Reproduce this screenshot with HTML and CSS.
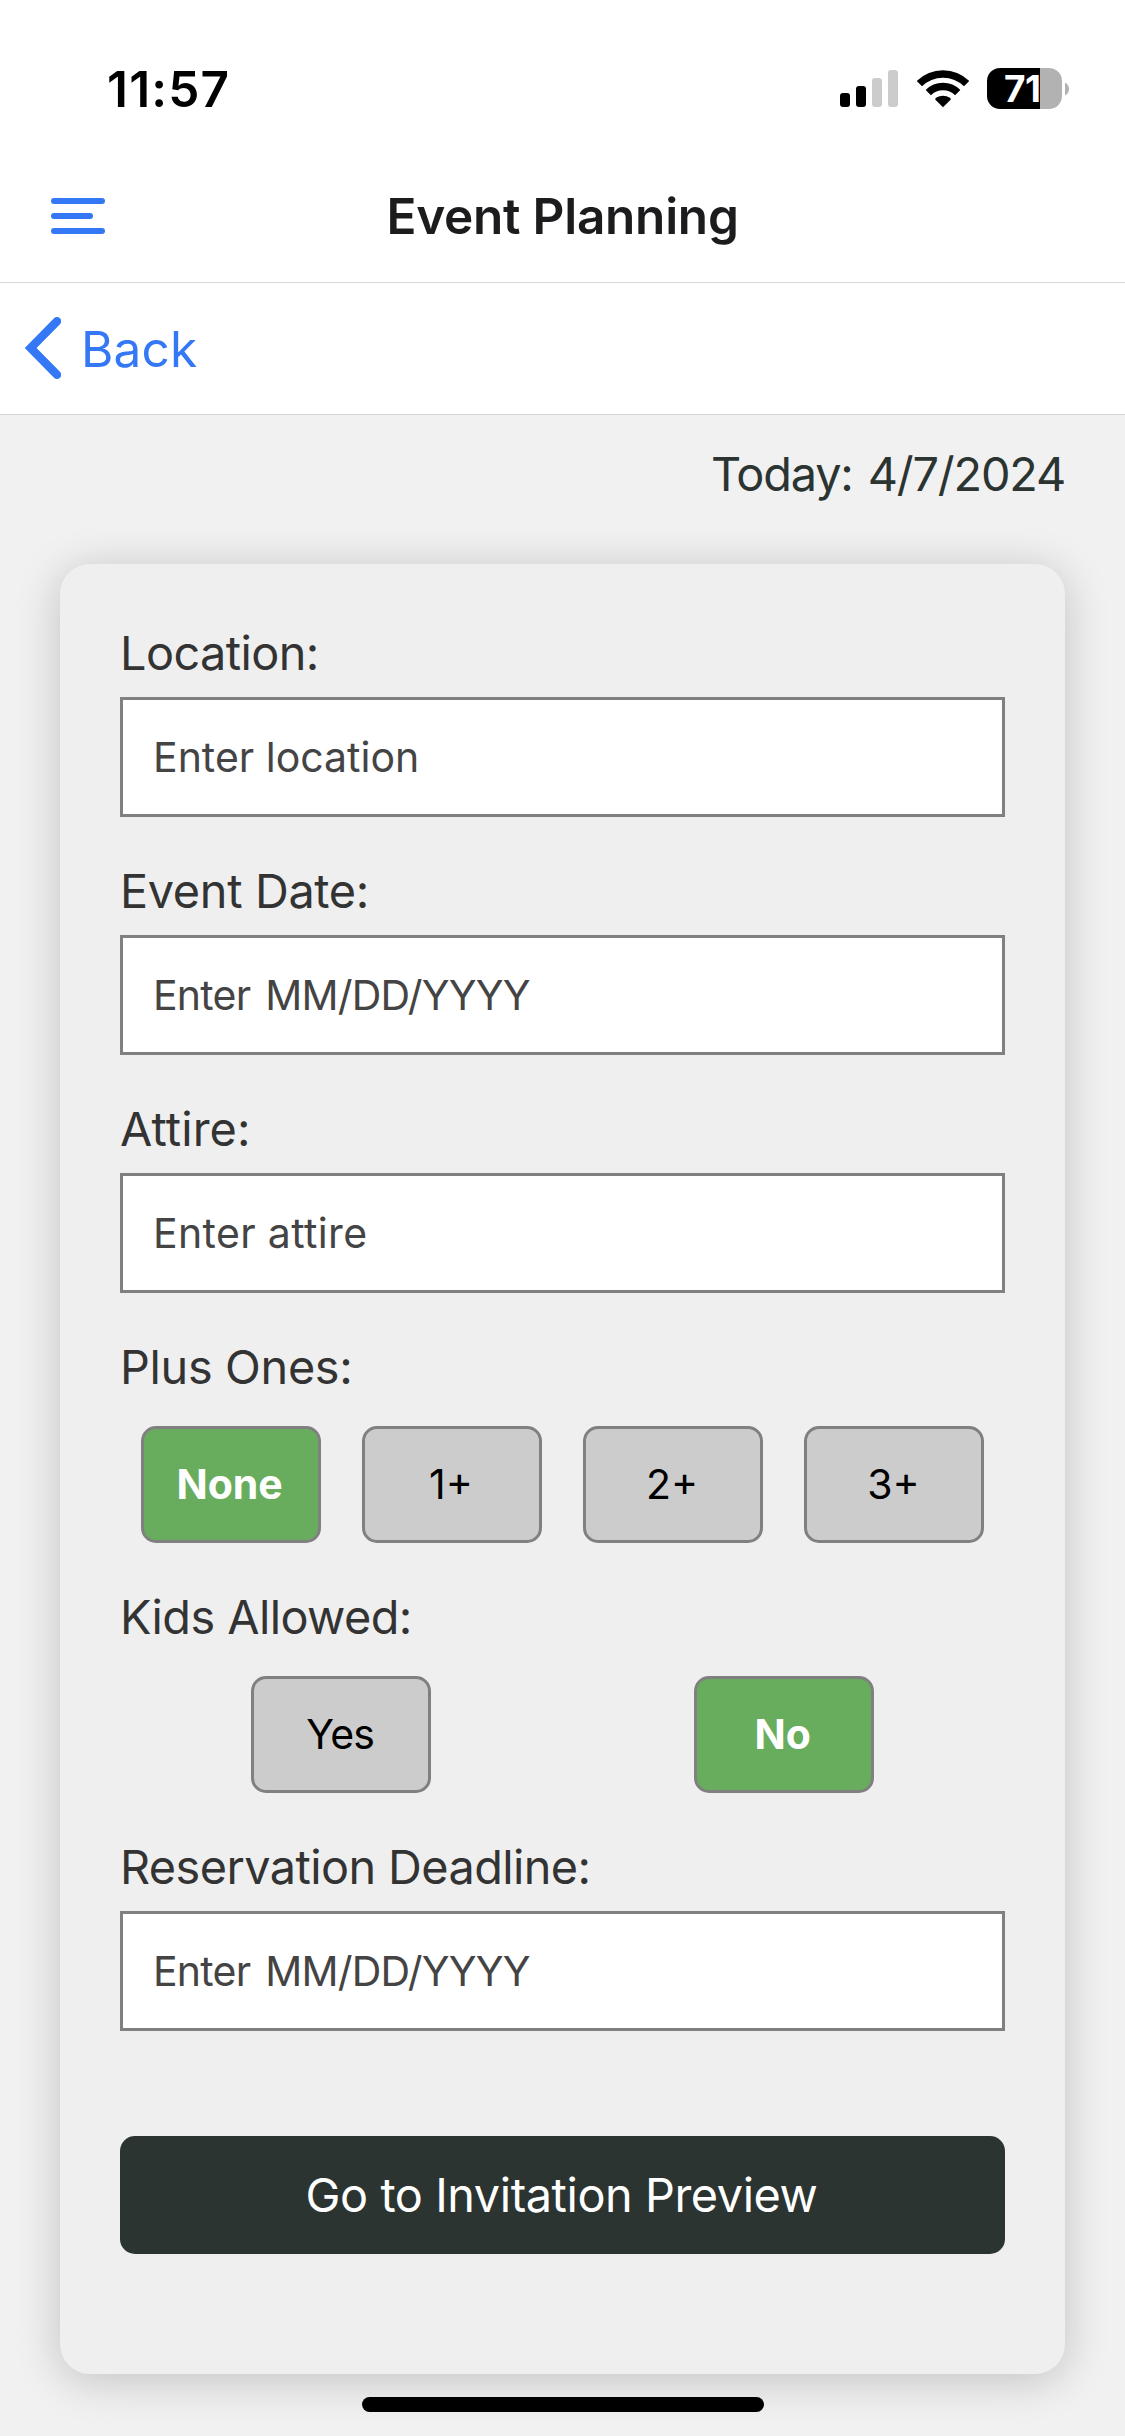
FILE: index.html
```html
<!DOCTYPE html>
<html lang="en">
<head>
<meta charset="utf-8">
<title>Event Planning</title>
<link rel="stylesheet" href="styles.css">
</head>
<body>
<div class="screen">
  <div class="status-bar">
    <span class="time">11:57</span>
    <div class="status-icons">
      <svg class="signal" width="58" height="37" viewBox="0 0 58 37">
        <rect x="0" y="23" width="10" height="14" rx="3"/>
        <rect x="16" y="16" width="10" height="21" rx="3"/>
        <rect x="32" y="8" width="10" height="29" rx="3" fill="#ccc"/>
        <rect x="48" y="0" width="10" height="37" rx="3" fill="#ccc"/>
      </svg>
      <svg class="wifi" width="52" height="38" viewBox="0 0 52 38">
        <g fill="none" stroke="#000" stroke-width="7.4">
          <path d="M2.4 13.7A33.4 33.4 0 0 1 49.6 13.7"/>
          <path d="M11.3 22.6A20.8 20.8 0 0 1 40.7 22.6"/>
        </g>
        <path d="M26 37.3L18.4 29.7Q17.8 28.6 19 27.8Q26 23.6 33 27.8Q34.2 28.6 33.6 29.7Z"/>
      </svg>
      <div class="battery">
        <div class="battery-body"><span class="battery-level">71</span></div>
        <svg width="4" height="14" viewBox="0 0 4 14"><path d="M0 .5Q4 2.5 4 7T0 13.5Z" fill="#b2b2b2"/></svg>
      </div>
    </div>
  </div>

  <header class="header">
    <svg class="menu" width="54" height="36" viewBox="0 0 54 36" fill="#3478f6">
      <rect width="54" height="6" rx="3"/>
      <rect y="15" width="42" height="6" rx="3"/>
      <rect y="30" width="54" height="6" rx="3"/>
    </svg>
    <h1 class="title">Event Planning</h1>
  </header>

  <nav class="back-bar">
    <svg width="36" height="62" viewBox="0 0 36 62">
      <path d="M32 4.2L5.6 31L32 57.8" fill="none" stroke="#3478f6" stroke-width="8.4" stroke-linecap="round" stroke-linejoin="miter"/>
    </svg>
    <span class="back-label">Back</span>
  </nav>

  <main class="content">
    <p class="today">Today: 4/7/2024</p>
    <form class="card">
      <div class="field">
        <label class="label">Location:</label>
        <input class="input" type="text" placeholder="Enter location">
      </div>
      <div class="field">
        <label class="label label-open">Event Date:</label>
        <input class="input input-date" type="text" placeholder="Enter MM/DD/YYYY">
      </div>
      <div class="field">
        <label class="label label-wide">Attire:</label>
        <input class="input input-wide" type="text" placeholder="Enter attire">
      </div>
      <div class="field choice">
        <span class="label label-open">Plus Ones:</span>
        <div class="options">
          <button type="button" class="option selected">None</button>
          <button type="button" class="option">1+</button>
          <button type="button" class="option">2+</button>
          <button type="button" class="option">3+</button>
        </div>
      </div>
      <div class="field choice">
        <span class="label">Kids Allowed:</span>
        <div class="options">
          <button type="button" class="option option-yes">Yes</button>
          <button type="button" class="option selected">No</button>
        </div>
      </div>
      <div class="field">
        <label class="label">Reservation Deadline:</label>
        <input class="input input-date" type="text" placeholder="Enter MM/DD/YYYY">
      </div>
      <button type="button" class="submit">Go to Invitation Preview</button>
    </form>
  </main>
  <div class="home-indicator"></div>
</div>
</body>
</html>
```
FILE: styles.css
```css
* {
  box-sizing: border-box;
}

body {
  margin: 0;
  font-family: Inter, "Liberation Sans", sans-serif;
}

.screen {
  position: relative;
  width: 1125px;
  height: 2436px;
  overflow: hidden;
  background: #f1f1f1;
}

.status-bar {
  display: flex;
  justify-content: space-between;
  height: 150px;
  padding: 28px 56px 0 107px;
  background: #fff;
}

.time {
  font-size: 49.5px;
  font-weight: 600;
  line-height: 122px;
  letter-spacing: 1.2px;
}

.status-icons {
  display: flex;
  align-items: center;
  height: 121px;
}

.wifi {
  margin-left: 18.5px;
}

.battery {
  display: flex;
  align-items: center;
  gap: 3px;
  margin-left: 18.5px;
}

.battery-body {
  width: 75px;
  height: 41px;
  border-radius: 13px;
  background: linear-gradient(to right, #000 53px, #b2b2b2 53px);
}

.battery-level {
  display: block;
  padding-left: 17px;
  color: #fff;
  font-size: 37px;
  font-weight: 700;
  line-height: 41px;
  letter-spacing: -0.5px;
}

.header {
  display: grid;
  grid-template-columns: 54px 1fr 54px;
  align-items: center;
  height: 133px;
  padding: 0 51px;
  border-bottom: 1px solid #d8d8d8;
  background: #fff;
}

.title {
  margin: 0;
  color: #1c1c1e;
  font-size: 49.5px;
  font-weight: 600;
  line-height: 60px;
  letter-spacing: -0.25px;
  text-align: center;
}

.back-bar {
  display: flex;
  align-items: center;
  gap: 20px;
  height: 132px;
  padding: 0 0 2px 25px;
  border-bottom: 1px solid #d8d8d8;
  background: #fff;
}

.back-label {
  padding-top: 2px;
  color: #3478f6;
  font-size: 49.5px;
  line-height: 60px;
  letter-spacing: 0.15px;
}

.content {
  padding: 29px 60px 0;
}

.today {
  margin: 0 0 60px;
  color: #2b3431;
  font-size: 46.8px;
  line-height: 60px;
  letter-spacing: -1.15px;
  word-spacing: 3px;
  text-align: right;
}

.card {
  display: flex;
  flex-direction: column;
  gap: 44px;
  height: 1810px;
  padding: 59px 60px 120px;
  border-radius: 30px;
  background: #efefef;
  box-shadow: 0 6px 45px rgba(0, 0, 0, 0.2);
}

.field {
  display: flex;
  flex-direction: column;
  gap: 14px;
}

.choice {
  gap: 29px;
}

.label {
  color: #333;
  font-size: 46.8px;
  line-height: 60px;
  letter-spacing: -0.57px;
}

.label-open {
  letter-spacing: -0.33px;
}

.label-wide {
  letter-spacing: 0.12px;
}

.input {
  width: 100%;
  height: 120px;
  padding: 0 30px;
  border: 3px solid #808080;
  border-radius: 0;
  background: #fff;
  font-family: inherit;
  font-size: 41px;
  letter-spacing: 0;
}

.input::placeholder {
  color: #444;
  opacity: 1;
}

.input-date {
  letter-spacing: -0.77px;
  word-spacing: 4px;
}

.input-wide {
  letter-spacing: 0.35px;
}

.options {
  display: flex;
  justify-content: space-around;
}

.option {
  width: 180px;
  height: 117px;
  padding: 0 2px 1px 0;
  border: 3px solid #808080;
  border-radius: 15px;
  background: #ccc;
  color: #000;
  font-family: inherit;
  font-size: 41px;
}

.option.selected {
  background: #68ad5d;
  color: #fff;
  font-weight: 700;
}

.option-yes {
  letter-spacing: -0.7px;
}

.submit {
  height: 118px;
  margin-top: 61px;
  padding: 0 2px 0 0;
  border: 0;
  border-radius: 15px;
  background: #2b3431;
  color: #fff;
  font-family: inherit;
  font-size: 46.8px;
  letter-spacing: -0.43px;
}

/* Overlays the bottom edge of the scrolled content. */
.home-indicator {
  position: absolute;
  bottom: 24px;
  left: 362px;
  width: 402px;
  height: 15px;
  border-radius: 7.5px;
  background: #000;
}
```
